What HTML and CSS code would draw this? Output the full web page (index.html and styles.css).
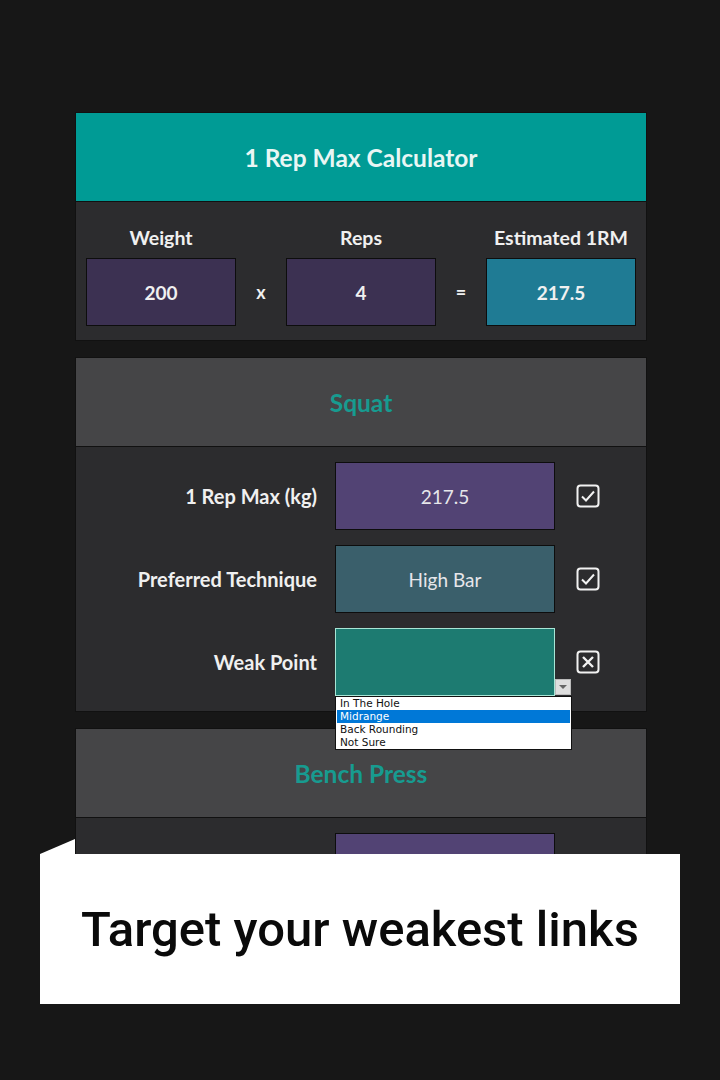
FILE: index.html
```html
<!DOCTYPE html>
<html lang="en">
<head>
    <meta charset="UTF-8">
    <meta name="viewport" content="width=device-width, initial-scale=1.0">
    <title>1 Rep Max Calculator</title>
    <link rel="stylesheet" href="styles.css">
</head>
<body>

    <div class="page">
        <!-- calculator card -->
        <section class="card">
            <div class="card-head calc-head">1 Rep Max Calculator</div>
            <div class="calc-body">
                <div class="calc-col">
                    <span class="calc-label">Weight</span>
                    <div class="calc-box">200</div>
                </div>
                <span class="calc-op">x</span>
                <div class="calc-col">
                    <span class="calc-label">Reps</span>
                    <div class="calc-box">4</div>
                </div>
                <span class="calc-op">=</span>
                <div class="calc-col">
                    <span class="calc-label">Estimated 1RM</span>
                    <div class="calc-box result">217.5</div>
                </div>
            </div>
        </section>

        <!-- squat -->
        <section class="card">
            <div class="card-head lift-head">Squat</div>
            <div class="lift-body">
                <div class="lift-row">
                    <span class="lift-label">1 Rep Max (kg)</span>
                    <div class="lift-box max">217.5</div>
                    <svg class="check" width="24" height="24" viewBox="0 0 24 24">
                        <rect x="1.5" y="1.5" width="21" height="21" rx="3" fill="none" stroke="#f2f2f2" stroke-width="2"/>
                        <path d="M6 12.5l4 4 8-9" fill="none" stroke="#f2f2f2" stroke-width="2"/>
                    </svg>
                </div>
                <div class="lift-row">
                    <span class="lift-label">Preferred Technique</span>
                    <div class="lift-box technique">High Bar</div>
                    <svg class="check" width="24" height="24" viewBox="0 0 24 24">
                        <rect x="1.5" y="1.5" width="21" height="21" rx="3" fill="none" stroke="#f2f2f2" stroke-width="2"/>
                        <path d="M6 12.5l4 4 8-9" fill="none" stroke="#f2f2f2" stroke-width="2"/>
                    </svg>
                </div>
                <div class="lift-row">
                    <span class="lift-label">Weak Point</span>
                    <div class="lift-box weak"></div>
                    <svg class="check" width="24" height="24" viewBox="0 0 24 24">
                        <rect x="1.5" y="1.5" width="21" height="21" rx="3" fill="none" stroke="#f2f2f2" stroke-width="2"/>
                        <path d="M7 7l10 10M17 7L7 17" fill="none" stroke="#f2f2f2" stroke-width="2.4"/>
                    </svg>
                    <div class="drop-btn"><span class="drop-arrow"></span></div>
                    <ul class="drop-list">
                        <li>In The Hole</li>
                        <li class="selected">Midrange</li>
                        <li>Back Rounding</li>
                        <li>Not Sure</li>
                    </ul>
                </div>
            </div>
        </section>

        <!-- bench press -->
        <section class="card">
            <div class="card-head lift-head">Bench Press</div>
            <div class="lift-body tall">
                <div class="lift-row">
                    <span class="lift-label">1 Rep Max (kg)</span>
                    <div class="lift-box max"></div>
                </div>
            </div>
        </section>
    </div>

    <div class="banner">
        <span class="banner-tail"></span>
        Target your weakest links
    </div>

</body>
</html>
```

FILE: styles.css
```css
body {
    margin: 0;
    padding: 0;
    background-color: #171717;
    font-family: Lato, "Open Sans", sans-serif;
    color: #f0f0f0;
    height: 1080px;
    overflow: hidden;
}

.page {
    width: 570px;
    margin-left: 76px;
    padding-top: 113px;
    display: flex;
    flex-direction: column;
    gap: 18px;
}

.card {
    background-color: #2c2c2e;
    box-shadow: 0 0 0 1px #111;
}

.card-head {
    height: 88px;
    display: flex;
    align-items: center;
    justify-content: center;
    font-weight: bold;
    font-size: 24.5px;
    border-bottom: 1px solid #111;
}

.calc-head {
    background-color: #009b95;
    color: #e9f6f4;
}

.lift-head {
    background-color: #454547;
    color: #179b90;
}

/* calculator */
.calc-body {
    display: flex;
    align-items: flex-end;
    padding: 23px 10px 14px;
}

.calc-col {
    display: flex;
    flex-direction: column;
    align-items: center;
    gap: 8px;
}

.calc-label {
    font-weight: bold;
    font-size: 19.5px;
    line-height: 25px;
}

.calc-box {
    width: 148px;
    height: 66px;
    border: 1px solid #0d0d0d;
    background-color: #3c3152;
    display: flex;
    align-items: center;
    justify-content: center;
    font-weight: bold;
    font-size: 19px;
}

.calc-box.result {
    background-color: #1f7b94;
}

.calc-op {
    width: 50px;
    height: 68px;
    display: flex;
    align-items: center;
    justify-content: center;
    font-weight: bold;
    font-size: 18px;
}

/* lift sections */
.lift-body {
    padding: 15px 0 15px;
    display: flex;
    flex-direction: column;
    gap: 15px;
}

.lift-body.tall {
    height: 140px;
}

.lift-row {
    position: relative;
    display: flex;
    align-items: center;
    height: 68px;
}

.lift-label {
    width: 241px;
    text-align: right;
    font-weight: bold;
    font-size: 20px;
    padding-right: 18px;
}

.lift-box {
    width: 218px;
    height: 66px;
    border: 1px solid #0d0d0d;
    display: flex;
    align-items: center;
    justify-content: center;
    font-size: 19px;
    color: #e6e6ea;
}

.lift-box.max {
    background-color: #524374;
}

.lift-box.technique {
    background-color: #3a5f6b;
}

.lift-box.weak {
    background-color: #1d7b71;
    border-color: #a8e6d6;
}

.check {
    margin-left: 21px;
}

/* dropdown */
.drop-btn {
    position: absolute;
    left: 479px;
    top: 51px;
    width: 16px;
    height: 16px;
    background-color: #dedede;
    border: 1px solid #bbb;
    box-sizing: border-box;
    display: flex;
    align-items: center;
    justify-content: center;
}

.drop-arrow {
    border-left: 4px solid transparent;
    border-right: 4px solid transparent;
    border-top: 4px solid #666;
}

.drop-list {
    position: absolute;
    left: 259px;
    top: 68px;
    width: 235px;
    margin: 0;
    padding: 0;
    list-style: none;
    background-color: #fff;
    border: 1px solid #111;
    font-family: "DejaVu Sans", sans-serif;
    font-size: 10.5px;
    color: #111;
    z-index: 2;
}

.drop-list li {
    height: 13px;
    line-height: 13px;
    padding-left: 4px;
}

.drop-list li.selected {
    background-color: #0078d7;
    color: #fff;
    margin: 0 1px;
    padding-left: 3px;
}

/* caption banner */
.banner {
    position: absolute;
    left: 40px;
    top: 854px;
    width: 640px;
    height: 150px;
    background-color: #fff;
    color: #0a0a0a;
    display: flex;
    align-items: center;
    justify-content: center;
    font-family: Roboto, sans-serif;
    font-weight: 500;
    font-size: 49px;
    z-index: 3;
}

.banner-tail {
    position: absolute;
    left: 0;
    top: -15px;
    width: 0;
    height: 0;
    border-left: 35px solid transparent;
    border-bottom: 15px solid #fff;
}
```
